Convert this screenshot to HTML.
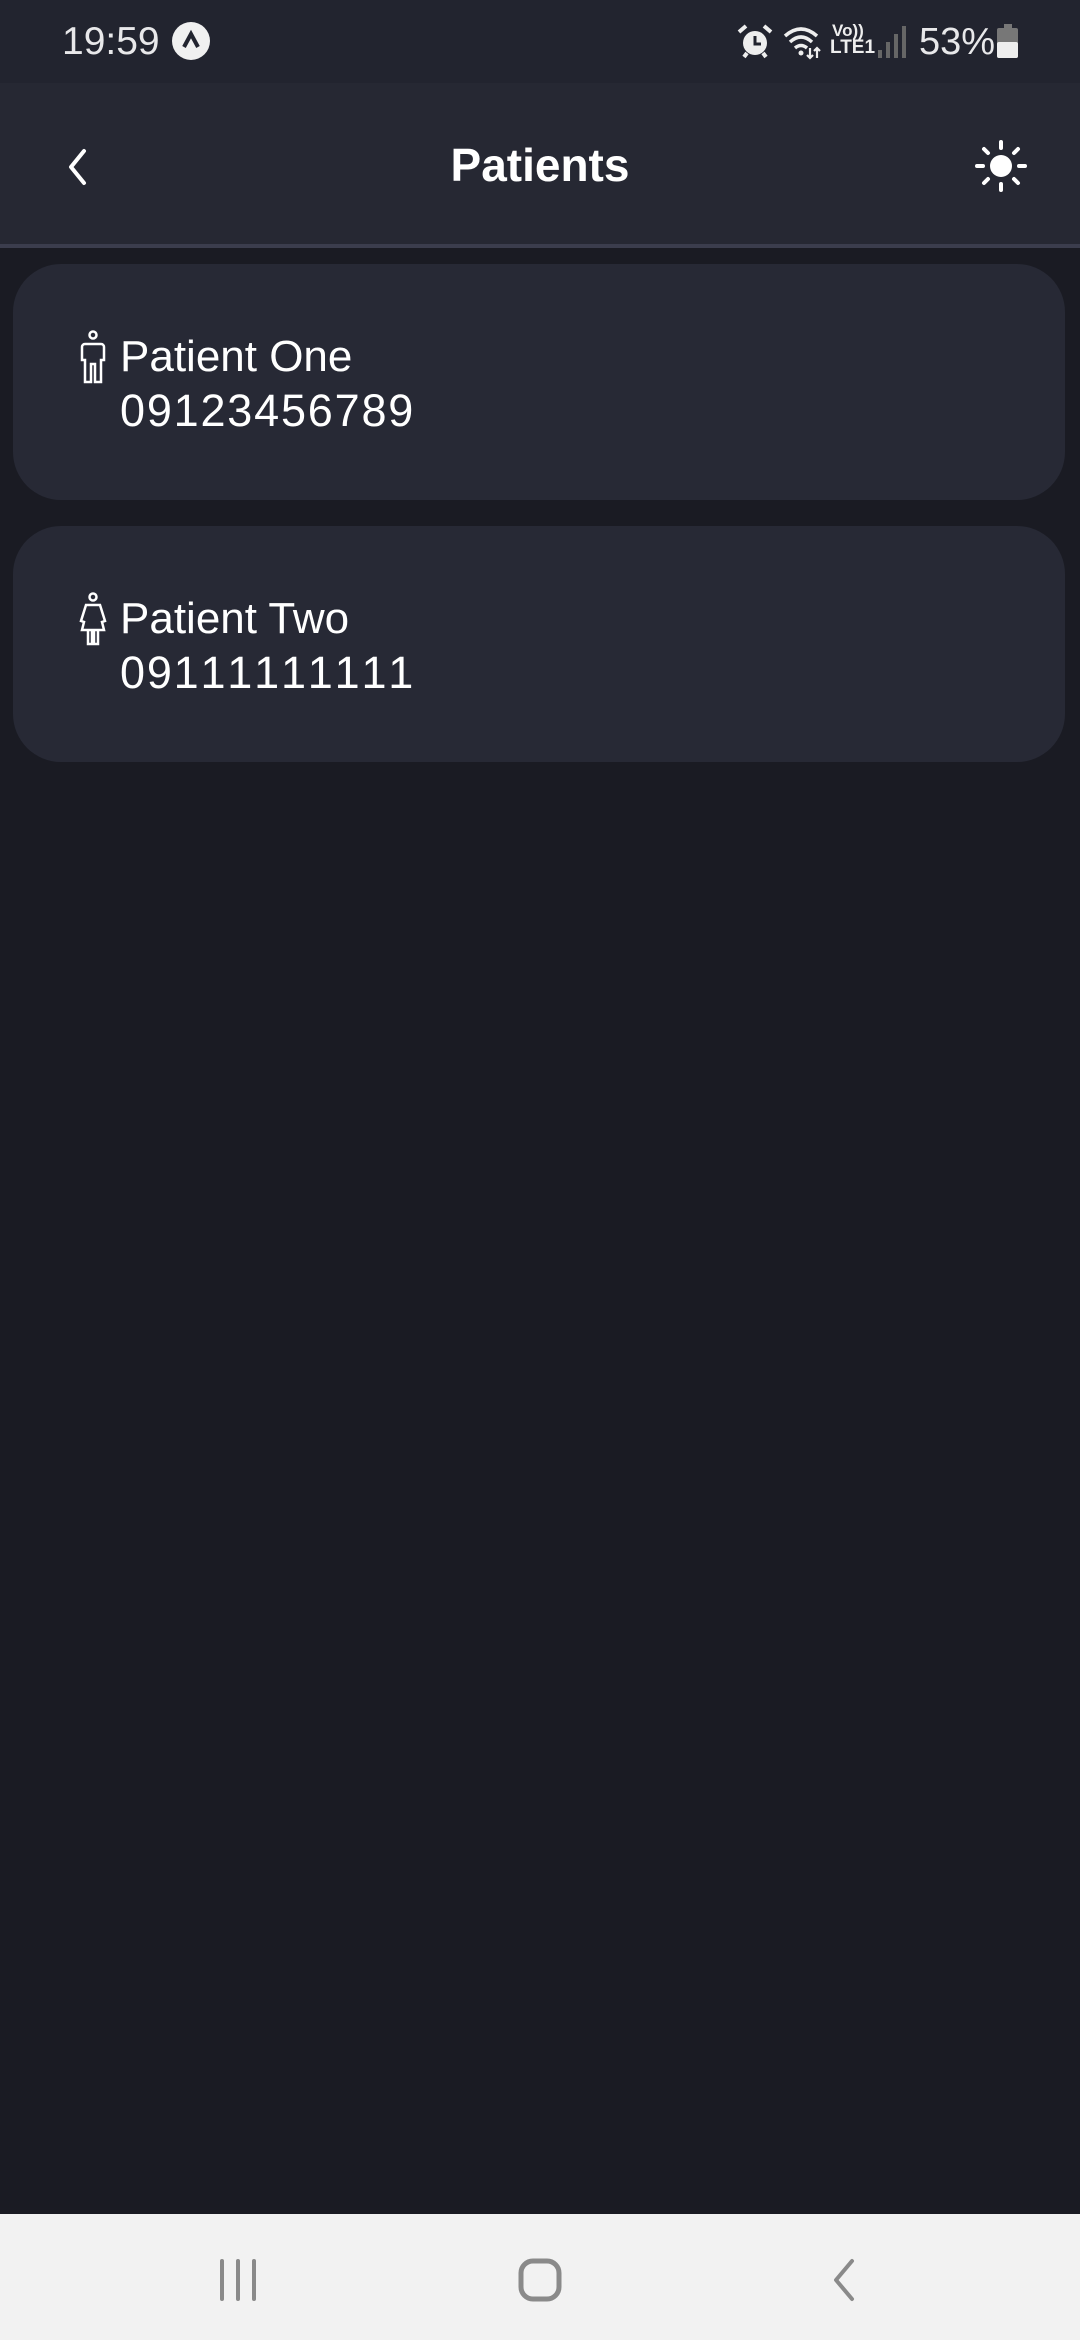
<!DOCTYPE html>
<html><head><meta charset="utf-8">
<style>
*{margin:0;padding:0;box-sizing:border-box}
html,body{width:1080px;height:2340px;overflow:hidden;background:#1a1b23;font-family:"Liberation Sans",sans-serif;color:#fff}
.status{position:absolute;left:0;top:0;width:1080px;height:83px;background:#22242f}
.appbar{position:absolute;left:0;top:83px;width:1080px;height:165px;background:#262833;border-bottom:4px solid #3b3d4d}
.title{position:absolute;left:0;width:1080px;top:0;height:165px;line-height:165px;text-align:center;font-weight:bold;font-size:46px}
.card{position:absolute;left:13px;width:1052px;height:236px;background:#272935;border-radius:48px}
.name{position:absolute;left:107px;top:66px;font-size:44px;line-height:54px}
.phone{position:absolute;left:107px;top:120px;font-size:45px;line-height:54px;letter-spacing:1.8px;font-variant-numeric:tabular-nums;font-feature-settings:"tnum" 1,"kern" 0;font-kerning:none}
.ic{position:absolute;left:67px;top:66px}
.nav{position:absolute;left:0;top:2214px;width:1080px;height:126px;background:#f2f2f2}
</style></head><body>
<div class="status">
  <div style="position:absolute;left:62px;top:20px;font-size:39px;color:#e8e8ea">19:59</div>
  <svg style="position:absolute;left:172px;top:22px" width="38" height="38" viewBox="0 0 38 38"><circle cx="19" cy="19" r="19" fill="#f0f0f0"/><path d="M12 25 L19 12 L26 25" stroke="#22242f" stroke-width="4" fill="none"/></svg>
  <svg style="position:absolute;left:736px;top:24px" width="38" height="36" viewBox="0 0 38 36"><circle cx="19" cy="19" r="12" fill="#eee"/><path d="M19 12v8h6" stroke="#22242f" stroke-width="3" fill="none"/><path d="M3 8 L10 2 M35 8 L28 2 M8 33 L11 29 M30 33 L27 29" stroke="#eee" stroke-width="4"/></svg>
  <svg style="position:absolute;left:783px;top:24px" width="40" height="36" viewBox="0 0 40 36"><path d="M2 12 Q18 -2 34 12 M7 18 Q18 8 29 18 M12 24 Q18 19 24 24" stroke="#eee" stroke-width="3.5" fill="none"/><circle cx="18" cy="29" r="2.5" fill="#eee"/><path d="M27 24v10 M24 31l3 3 3-3 M34 34v-10 M31 27l3-3 3 3" stroke="#eee" stroke-width="2.2" fill="none"/></svg>
  <div style="position:absolute;left:832px;top:22px;font-size:17px;font-weight:bold;color:#eee;line-height:17px">Vo))</div>
  <div style="position:absolute;left:830px;top:38px;font-size:19px;font-weight:bold;color:#eee;line-height:20px">LTE1</div>
  <svg style="position:absolute;left:877px;top:26px" width="30" height="32" viewBox="0 0 30 32"><rect x="1" y="24" width="4" height="8" fill="#666"/><rect x="9" y="16" width="4" height="16" fill="#666"/><rect x="17" y="8" width="4" height="24" fill="#666"/><rect x="25" y="0" width="4" height="32" fill="#666"/></svg>
  <div style="position:absolute;left:919px;top:21px;font-size:38px;color:#e8e8ea">53%</div>
  <svg style="position:absolute;left:997px;top:24px" width="22" height="34" viewBox="0 0 22 34"><rect x="7" y="0" width="8" height="4" fill="#777"/><rect x="0" y="4" width="21" height="30" rx="2" fill="#777"/><rect x="0" y="18" width="21" height="16" rx="2" fill="#eee"/></svg>
</div>
<div class="appbar">
  <svg style="position:absolute;left:64px;top:64px" width="28" height="40" viewBox="0 0 28 40"><path d="M20 4 L7 20 L20 36" stroke="#fff" stroke-width="4" fill="none" stroke-linecap="round" stroke-linejoin="round"/></svg>
  <div class="title">Patients</div>
  <svg style="position:absolute;left:975px;top:57px" width="52" height="52" viewBox="0 0 52 52"><circle cx="26" cy="26" r="11" fill="#fff"/><g stroke="#fff" stroke-width="4" stroke-linecap="round"><path d="M26 2v6M26 44v6M2 26h6M44 26h6M9 9l4 4M39 39l4 4M9 43l4-4M39 13l4-4"/></g></svg>
</div>

<div class="card" style="top:264px">
  <svg class="ic" width="26" height="54" viewBox="0 0 26 54"><g stroke="#fff" stroke-width="2.5" fill="none"><circle cx="13" cy="5" r="3.5"/><path d="M5 14h16a3 3 0 0 1 3 3v13h-3v22h-6v-18h-4v18h-6v-22h-3v-13a3 3 0 0 1 3-3z"/></g></svg>
  <div class="name">Patient One</div>
  <div class="phone">09123456789</div>
</div>
<div class="card" style="top:526px">
  <svg class="ic" style="left:65px" width="30" height="54" viewBox="0 0 30 54"><g stroke="#fff" stroke-width="2.5" fill="none"><circle cx="15" cy="5" r="3.5"/><path d="M8 13h14l5 16-3 1 2 8h-22l2-8-3-1z"/><path d="M10 38v14h4v-14M16 38v14h4v-14"/></g></svg>
  <div class="name">Patient Two</div>
  <div class="phone">09111111111</div>
</div>

<div class="nav">
  <svg style="position:absolute;left:218px;top:44px" width="42" height="44" viewBox="0 0 42 44"><g stroke="#8a8a8a" stroke-width="4" stroke-linecap="round"><path d="M4 3v38M20 3v38M36 3v38"/></g></svg>
  <svg style="position:absolute;left:518px;top:44px" width="46" height="46" viewBox="0 0 46 46"><rect x="3" y="3" width="38" height="38" rx="12" stroke="#8a8a8a" stroke-width="5" fill="none"/></svg>
  <svg style="position:absolute;left:828px;top:44px" width="30" height="44" viewBox="0 0 30 44"><path d="M24 3 L8 22 L24 41" stroke="#8a8a8a" stroke-width="4" fill="none" stroke-linecap="round" stroke-linejoin="round"/></svg>
</div>
</body></html>
